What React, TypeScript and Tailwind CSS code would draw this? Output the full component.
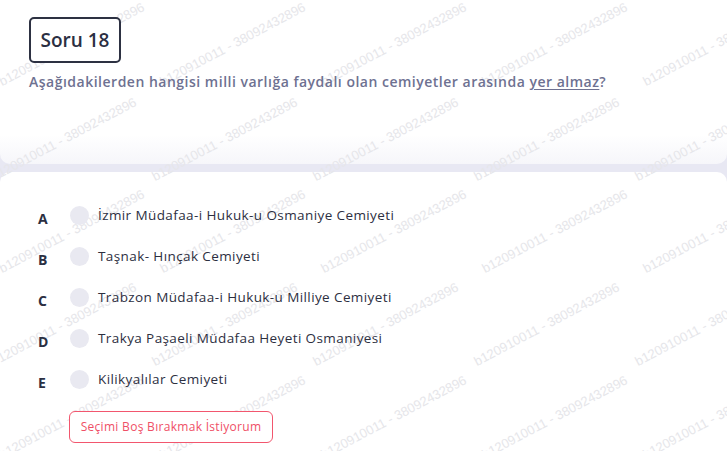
import React from "react";

const options = [
    { key: 'A', text: 'İzmir Müdafaa-i Hukuk-u Osmaniye Cemiyeti' },
    { key: 'B', text: 'Taşnak- Hınçak Cemiyeti' },
    { key: 'C', text: 'Trabzon Müdafaa-i Hukuk-u Milliye Cemiyeti' },
    { key: 'D', text: 'Trakya Paşaeli Müdafaa Heyeti Osmaniyesi' },
    { key: 'E', text: 'Kilikyalılar Cemiyeti' },
]

const Watermark = () => {
    const rows = [85, 180, 272, 365, 458, 550]
    const cols = [0, 1, 2, 3, 4, 5]

    return (
        <div className="pointer-events-none absolute inset-0 z-0 overflow-hidden select-none">
            {rows.map((y, r) =>
                cols.map((c) => (
                    <span
                        key={`${r}-${c}`}
                        className="absolute whitespace-nowrap text-[13px] leading-none text-[#e6e6ea] font-['Liberation_Sans',sans-serif]"
                        style={{
                            left: (r % 2 ? -5 : 3) + c * 161,
                            top: y - 10,
                            transform: 'rotate(-28deg)',
                            transformOrigin: 'left bottom',
                        }}
                    >
                        b120910011 - 38092432896
                    </span>
                ))
            )}
        </div>
    )
}

export default function App() {
    return (
        <div className="relative min-h-screen overflow-hidden bg-[#e8e8f3] font-['Open_Sans',sans-serif]">

            {/* Question card */}
            <section className="h-[164px] rounded-b-[10px] bg-[linear-gradient(to_bottom,#ffffff_82%,#f6f6fa)] pl-[29px] pt-[17px]">
                <div className="relative z-10 flex h-[46px] w-[92px] items-center justify-center rounded-[5px] border-2 border-[#2d3142] bg-white">
                    <span className="text-[19px] font-semibold text-[#2b2f42]">Soru 18</span>
                </div>
                <p className="relative z-10 mt-[8px] text-[14px] font-semibold tracking-[0.5px] text-[#6e7191]">
                    Aşağıdakilerden hangisi milli varlığa faydalı olan cemiyetler arasında <span className="underline underline-offset-2">yer almaz</span>?
                </p>
            </section>

            {/* Options card */}
            <section className="mt-[8px] min-h-[279px] rounded-t-[10px] bg-white pl-[38px] pt-[23px]">
                <div className="relative z-10 flex flex-col">
                    {options.map((option) => (
                        <div key={option.key} className="flex h-[41px] items-center">
                            <span className="mt-[5px] w-[32px] text-[14px] font-bold text-[#2b2f42]">{option.key}</span>
                            <span className="h-[19px] w-[19px] rounded-full bg-[#e9e9f1]" />
                            <span className="ml-[9px] text-[13.5px] tracking-[0.4px] text-[#2d2f3f]">{option.text}</span>
                        </div>
                    ))}
                </div>
                <button
                    type="button"
                    className="relative z-10 mt-[11px] ml-[31px] flex h-[32px] w-[204px] items-center justify-center rounded-[6px] border border-[#f2566e] bg-white text-[12px] tracking-[0.3px] text-[#ef4f66]"
                >
                    Seçimi Boş Bırakmak İstiyorum
                </button>
            </section>

            <Watermark />
        </div>
    )
}
